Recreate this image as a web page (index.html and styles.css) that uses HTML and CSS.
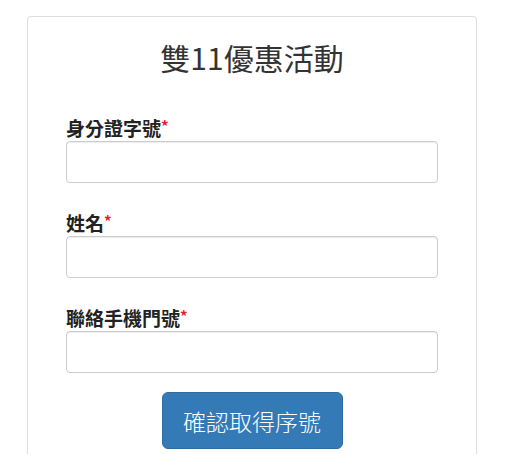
FILE: index.html
```html
<!DOCTYPE html>
<html lang="zh-Hant">
<head>
<meta charset="utf-8">
<title>雙11優惠活動</title>
<link rel="stylesheet" href="styles.css">
</head>
<body>
<div class="card">
  <h2 class="title">雙11優惠活動</h2>
  <form class="form">
    <div class="group">
      <label class="label">身分證字號<span class="req">*</span></label>
      <input class="input" type="text">
    </div>
    <div class="group">
      <label class="label">姓名<span class="req">*</span></label>
      <input class="input" type="text">
    </div>
    <div class="group">
      <label class="label">聯絡手機門號<span class="req">*</span></label>
      <input class="input" type="text">
    </div>
    <div class="actions">
      <button class="btn" type="button">確認取得序號</button>
    </div>
  </form>
</div>
</body>
</html>
```

FILE: styles.css
```css
html, body {
  margin: 0;
  padding: 0;
  background: #fff;
}
body {
  font-family: "Noto Sans CJK TC", "Liberation Sans", sans-serif;
  color: #333;
}
.card {
  box-sizing: border-box;
  width: 450px;
  margin: 16px 0 0 27px;
  border: 1px solid #ddd;
  border-bottom: none;
  border-radius: 4px 4px 0 0;
  padding: 0 38px 20px;
  height: 460px;
}
.title {
  margin: 24px 0 0;
  font-size: 30px;
  line-height: 33px;
  font-weight: 400;
  text-align: center;
  color: #333;
}
.form {
  display: flex;
  flex-direction: column;
  gap: 30px;
  margin-top: 44px;
}
.group {
  display: flex;
  flex-direction: column;
  gap: 3px;
}
.label {
  font-size: 19px;
  line-height: 20px;
  font-weight: 700;
  color: #222;
}
.req {
  color: #e4202e;
  font-size: 15px;
  vertical-align: top;
  line-height: 16px;
}
.input {
  box-sizing: border-box;
  width: 100%;
  height: 42px;
  border: 1px solid #ccc;
  border-radius: 4px;
  box-shadow: inset 0 1px 1px rgba(0,0,0,0.075);
  margin: 0;
  padding: 6px 12px;
  font-size: 16px;
}
.actions {
  display: flex;
  justify-content: center;
  margin-top: -11px;
}
.btn {
  width: 181px;
  height: 57px;
  background: #337ab7;
  border: 1px solid #2e6da4;
  border-radius: 6px;
  color: #fff;
  font-family: "Noto Sans CJK TC", sans-serif;
  font-size: 23px;
  font-weight: 300;
  padding: 0;
}
```
